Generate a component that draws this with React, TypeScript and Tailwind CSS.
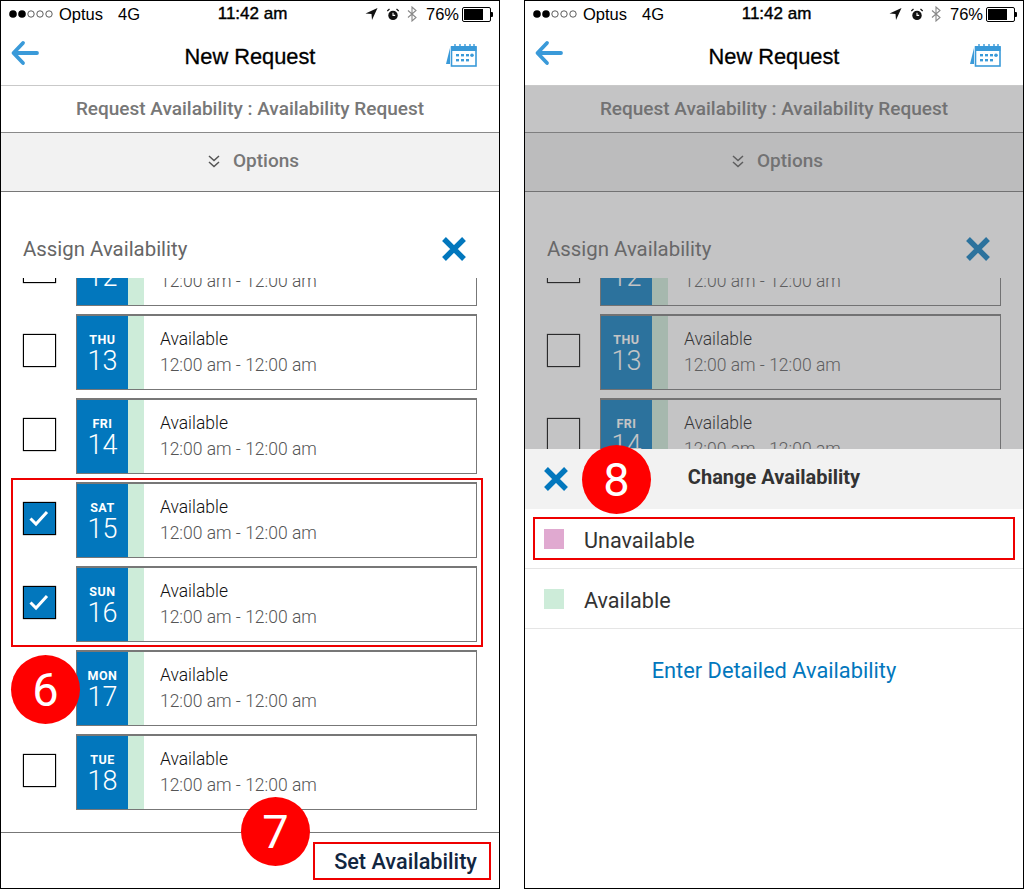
import React from "react";

const days = [
  { d: "WED", n: "12", c: false },
  { d: "THU", n: "13", c: false },
  { d: "FRI", n: "14", c: false },
  { d: "SAT", n: "15", c: true },
  { d: "SUN", n: "16", c: true },
  { d: "MON", n: "17", c: false },
  { d: "TUE", n: "18", c: false },
];

function Signal() {
  return (
    <svg width="45" height="10" viewBox="0 0 45 10" className="block">
      <circle cx="4" cy="5" r="3.8" fill="#000" />
      <circle cx="13" cy="5" r="3.8" fill="#000" />
      <circle cx="22" cy="5" r="3.2" fill="none" stroke="#333" strokeWidth="0.8" />
      <circle cx="31" cy="5" r="3.2" fill="none" stroke="#333" strokeWidth="0.8" />
      <circle cx="40" cy="5" r="3.2" fill="none" stroke="#333" strokeWidth="0.8" />
    </svg>
  );
}

function StatusBar() {
  return (
    <div className="relative flex h-[28px] items-center pb-[2px] pl-[8px] pr-[6px] font-['Liberation_Sans',sans-serif] text-[16.5px] text-black">
      <Signal />
      <span className="ml-[5px]">Optus</span>
      <span className="ml-[15px]">4G</span>
      <span className="flex-1 text-center text-[17px] [-webkit-text-stroke:0.4px_black]">11:42 am</span>
      <svg width="13" height="14" viewBox="0 0 13 14" className="mr-[8px]">
        <path d="M12.5 1 L0.5 6.5 L6.5 7 L7 13 Z" fill="#111" />
      </svg>
      <svg width="14" height="15" viewBox="0 0 16 16" className="mr-[7px]">
        <circle cx="8" cy="9" r="5.4" fill="#111" />
        <path d="M8 6 V9 H10.5" stroke="#fff" strokeWidth="1.2" fill="none" />
        <path d="M1.5 4 L4 1.8 M14.5 4 L12 1.8" stroke="#111" strokeWidth="1.4" />
      </svg>
      <svg width="10" height="16" viewBox="0 0 10 16" className="mr-[9px]">
        <path d="M1 4.5 L9 11.5 L5 15 V1 L9 4.5 L1 11.5" stroke="#888" strokeWidth="1.1" fill="none" />
      </svg>
      <span>76%</span>
      <div className="ml-[3px] flex items-center">
        <div className="h-[15px] w-[29px] rounded-[2px] border border-black p-[1px]">
          <div className="h-full w-[76%] bg-black" />
        </div>
        <div className="h-[5px] w-[2px] rounded-r-[1px] bg-black" />
      </div>
    </div>
  );
}

function CalendarIcon() {
  return (
    <svg width="32" height="24" viewBox="0 0 32 24" className="block">
      <path d="M5 5 L5 21 L1 21 Z" fill="#3a9ad9" />
      <rect x="6.5" y="4" width="24.5" height="19" fill="none" stroke="#3a9ad9" strokeWidth="1.6" />
      <rect x="6" y="3" width="25.5" height="5" fill="#3a9ad9" />
      <path d="M10 1 V5 M15 1 V5 M20 1 V5 M25 1 V5 M29 1 V5" stroke="#3a9ad9" strokeWidth="1.4" />
      <g fill="#3a9ad9">
        <rect x="11" y="11" width="3" height="2.4" />
        <rect x="16" y="11" width="3" height="2.4" />
        <rect x="21" y="11" width="3" height="2.4" />
        <circle cx="27" cy="12.2" r="1.8" />
        <rect x="11" y="16" width="3" height="2.4" />
        <rect x="16" y="16" width="3" height="2.4" />
        <rect x="21" y="16" width="3" height="2.4" />
      </g>
    </svg>
  );
}

function XIcon({ color }: { color: string }) {
  return (
    <svg width="26" height="26" viewBox="0 0 26 26" className="block">
      <path d="M3 3 L23 23 M23 3 L3 23" stroke={color} strokeWidth="5.4" />
    </svg>
  );
}

function Row({ d, n, c }: { d: string; n: string; c: boolean }) {
  return (
    <div className="flex h-[76px] shrink-0 items-center pl-[22px] pr-[22px]">
      <div
        className={
          c
            ? "mb-[4px] flex h-[33px] w-[33px] items-center justify-center border border-black bg-[#0277bd] shadow-[0_0_1px_#222]"
            : "mb-[4px] h-[33px] w-[33px] border border-black bg-transparent shadow-[0_0_1px_#222]"
        }
      >
        {c && (
          <svg width="20" height="17" viewBox="0 0 20 17">
            <path d="M1.5 8.5 L7 14 L18 2" stroke="#fff" strokeWidth="3" fill="none" />
          </svg>
        )}
      </div>
      <div className="ml-[20px] flex h-[76px] w-[402px] border border-t-2 border-[#777]">
        <div className="flex w-[51px] flex-col items-center bg-[#0277bd] pt-[17px] text-white">
          <span className="text-[12.5px] font-bold leading-[14px] tracking-[0.5px]">{d}</span>
          <span className="mt-[2px] text-[27px] font-light leading-[25px]">{n}</span>
        </div>
        <div className="w-[16px] bg-[#cdecd9]" />
        <div className="pl-[16px] pt-[12px]">
          <div className="text-[17.5px] font-light leading-[22px] text-[#111]">Available</div>
          <div className="mt-[4px] text-[17.5px] font-light leading-[22px] text-[#555]">12:00 am - 12:00 am</div>
        </div>
      </div>
    </div>
  );
}

function Circle({ n, cls }: { n: string; cls: string }) {
  return (
    <div className={"absolute flex h-[69px] w-[69px] items-center justify-center rounded-full bg-[#ff0000] text-[47px] leading-none text-white " + cls}>
      {n}
    </div>
  );
}

function Phone({ sheet }: { sheet: boolean }) {
  return (
    <div className="relative flex h-[889px] w-[500px] shrink-0 flex-col overflow-hidden border border-black bg-white font-['Roboto',sans-serif]">
      <StatusBar />
      <div className="relative flex h-[57px] items-center justify-center border-b border-[#c9c9c9]">
        <svg width="30" height="26" viewBox="0 0 30 26" className="absolute left-[9px] top-[11px]">
          <path d="M27 13 H4 M13 3 L3.5 13 L13 23" stroke="#3a9ad9" strokeWidth="3.8" fill="none" strokeLinecap="round" strokeLinejoin="round" />
        </svg>
        <span className="font-['Liberation_Sans',sans-serif] text-[21.8px] text-black [-webkit-text-stroke:0.3px_black]">New Request</span>
        <div className="absolute left-[444px] top-[14px]">
          <CalendarIcon />
        </div>
      </div>
      <div className="flex h-[47px] items-center justify-center border-b border-[#8a8a8a] text-[19px] font-medium text-[#777]">
        Request Availability : Availability Request
      </div>
      <div className="flex h-[59px] items-center justify-center gap-[12px] border-b border-[#777] bg-[#f2f2f2] pb-[2px] pl-[6px] text-[19px] font-medium text-[#777]">
        <svg width="14" height="14" viewBox="0 0 14 14">
          <path d="M2 2 L7 6.5 L12 2 M2 8 L7 12.5 L12 8" stroke="#555" strokeWidth="1.5" fill="none" />
        </svg>
        Options
      </div>
      <div className="flex h-[86px] shrink-0 items-center justify-between pl-[22px] pr-[32px] pt-[28px]">
        <span className="text-[20.4px] text-[#666]">Assign Availability</span>
        <XIcon color="#0277bd" />
      </div>
      <div className="flex min-h-0 flex-1 flex-col overflow-hidden">
        <div className="-mt-[48px] flex flex-col gap-[8px]">
          {days.map((x) => (
            <Row key={x.n} {...x} />
          ))}
        </div>
      </div>
      <div className="flex h-[56px] shrink-0 items-center justify-end border-t border-[#777] pr-[22px] pt-[3px] text-[21.7px] font-medium text-[#12263f]">
        Set Availability
      </div>

      {!sheet && (
        <>
          <div className="absolute left-[10px] top-[477px] h-[169px] w-[472px] border-2 border-[#ee0000]" />
          <Circle n="6" cls="left-[10px] top-[654px]" />
          <Circle n="7" cls="left-[240px] top-[796px]" />
          <div className="absolute left-[312px] top-[841px] h-[38px] w-[178px] border-2 border-[#ee0000]" />
        </>
      )}
      {sheet && (
        <>
          <div className="absolute inset-x-0 bottom-0 top-[85px] bg-[#6b6b6e]/40" />
          <div className="absolute inset-x-0 bottom-0 top-[448px] flex flex-col bg-white">
            <div className="flex h-[60px] shrink-0 items-center justify-center bg-[#f2f2f2] pb-[4px] text-[20px] font-bold text-[#333]">
              Change Availability
            </div>
            <div className="absolute left-[18px] top-[17px]">
              <XIcon color="#0277bd" />
            </div>
            <div className="flex h-[60px] shrink-0 items-center border-b border-[#e5e5e5] pl-[19px] pr-[8px]">
              <div className="h-[20px] w-[20px] bg-[#e0a9d0]" />
              <span className="ml-[20px] pt-[6px] text-[21.6px] text-[#333]">Unavailable</span>
            </div>
            <div className="flex h-[60px] shrink-0 items-center border-b border-[#e5e5e5] pl-[19px]">
              <div className="h-[20px] w-[20px] bg-[#cdecd9]" />
              <span className="ml-[20px] pt-[6px] text-[21.6px] text-[#333]">Available</span>
            </div>
            <div className="flex h-[82px] shrink-0 items-center justify-center pt-[2px] text-[21.8px] text-[#0277bd]">
              Enter Detailed Availability
            </div>
          </div>
          <div className="absolute left-[8px] top-[516px] h-[43px] w-[482px] border-2 border-[#ee0000]" />
          <Circle n="8" cls="left-[57px] top-[444px]" />
        </>
      )}
    </div>
  );
}

export default function App() {
  return (
    <div className="flex h-[889px] w-[1024px] gap-[24px] overflow-hidden bg-white">
      <Phone sheet={false} />
      <Phone sheet={true} />
    </div>
  );
}
